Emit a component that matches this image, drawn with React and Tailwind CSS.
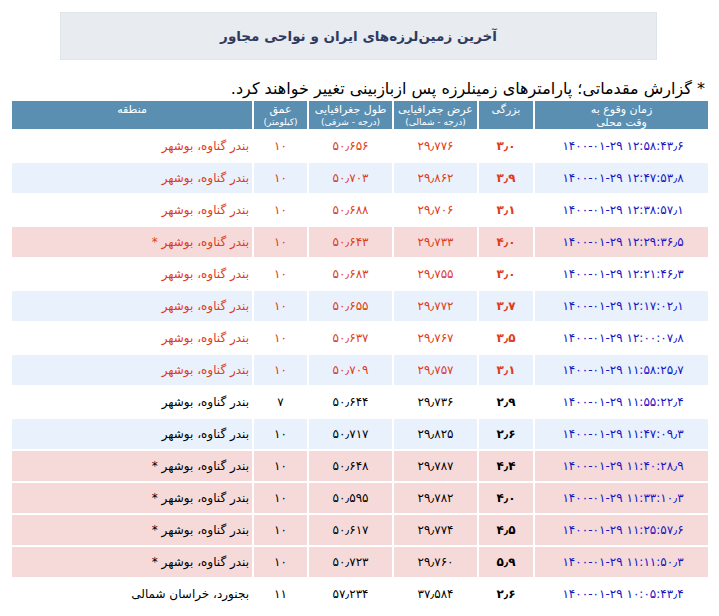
import React from "react";

const faDigits = "۰۱۲۳۴۵۶۷۸۹";
const fa = (s) =>
  String(s)
    .replace(/[0-9]/g, (d) => faDigits[d])
    .replace(/\./g, "٫");

const GANAVEH = "بندر گناوه، بوشهر";

const rows = [
  { t: "12:58:43.6", m: "3.0", lat: "29.776", lon: "50.656", d: "10", red: true, bg: "white" },
  { t: "12:47:53.8", m: "3.9", lat: "29.862", lon: "50.703", d: "10", red: true, bg: "blue" },
  { t: "12:38:57.1", m: "3.1", lat: "29.706", lon: "50.688", d: "10", red: true, bg: "white" },
  { t: "12:29:36.5", m: "4.0", lat: "29.733", lon: "50.643", d: "10", red: true, bg: "pink", star: true },
  { t: "12:21:46.3", m: "3.0", lat: "29.755", lon: "50.683", d: "10", red: true, bg: "white" },
  { t: "12:17:02.1", m: "3.7", lat: "29.772", lon: "50.655", d: "10", red: true, bg: "blue" },
  { t: "12:00:07.8", m: "3.5", lat: "29.767", lon: "50.637", d: "10", red: true, bg: "white" },
  { t: "11:58:25.7", m: "3.1", lat: "29.757", lon: "50.709", d: "10", red: true, bg: "blue" },
  { t: "11:55:22.4", m: "2.9", lat: "29.736", lon: "50.644", d: "7", bg: "white" },
  { t: "11:47:09.3", m: "2.6", lat: "29.825", lon: "50.717", d: "10", bg: "blue" },
  { t: "11:40:28.9", m: "4.4", lat: "29.787", lon: "50.648", d: "10", bg: "pink", star: true },
  { t: "11:33:10.3", m: "4.0", lat: "29.782", lon: "50.595", d: "10", bg: "pink", star: true },
  { t: "11:25:57.6", m: "4.5", lat: "29.774", lon: "50.617", d: "10", bg: "pink", star: true },
  { t: "11:11:50.3", m: "5.9", lat: "29.760", lon: "50.723", d: "10", bg: "pink", star: true },
  { t: "10:05:43.4", m: "2.6", lat: "37.584", lon: "57.234", d: "11", bg: "white", place: "بجنورد، خراسان شمالی" },
];

const bgClass = {
  white: "bg-white",
  blue: "bg-[#e8f1fc]",
  pink: "bg-[#f6dada]",
};

const Row = ({ r }) => {
  const bg = bgClass[r.bg];
  const color = r.red ? "text-[#e03c1c]" : "text-black";
  const place = (r.place || GANAVEH) + (r.star ? " *" : "");
  return (
    <tr className="h-[30px]">
      <td dir="ltr" className={`${bg} text-center pl-[3px] text-[#1414c8] text-[12px] tracking-[2.8px]`}>
        {fa("1400-01-29")} {fa(r.t)}
      </td>
      <td dir="ltr" className={`${bg} text-center font-semibold text-[12px] tracking-[1px] ${color}`}>{fa(r.m)}</td>
      <td dir="ltr" className={`${bg} text-center text-[12px] tracking-[1px] ${color}`}>{fa(r.lat)}</td>
      <td dir="ltr" className={`${bg} text-center text-[12px] tracking-[1px] ${color}`}>{fa(r.lon)}</td>
      <td className={`${bg} text-center text-[12px] tracking-[1px] ${color}`}>{fa(r.d)}</td>
      <td className={`${bg} text-right pr-[3px] text-[12px] ${color}`}>{place}</td>
    </tr>
  );
};

const Head = ({ title, sub, small, w }) => (
  <th className={`bg-[#5a8fb2] text-white font-normal align-top pt-[2px] leading-[13px] ${w}`}>
    <div className="text-[11px]">{title}</div>
    {sub && <div className={small ? "text-[11px]" : "text-[9px]"}>{sub}</div>}
  </th>
);

export default function App() {
  return (
    <div dir="rtl" className="w-[719px] h-[616px] bg-white overflow-hidden" style={{ fontFamily: '"DejaVu Sans", Tahoma, sans-serif' }}>
      <div className="pt-[12px] flex justify-center">
        <div className="w-[597px] h-[48px] bg-[#e8ebf0] border border-[#dfe3ea] flex items-center justify-center mr-[2px]">
          <h1 className="text-[13.5px] font-bold text-[#2e3b5e]">آخرین زمین‌لرزه‌های ایران و نواحی مجاور</h1>
        </div>
      </div>
      <p className="mt-[18px] pr-[14px] text-[16px] text-black leading-[21px]">
        * گزارش مقدماتی؛ پارامترهای زمینلرزه پس ازبازبینی تغییر خواهند کرد.
      </p>
      <table className="mr-[9px] w-[700px] border-separate border-spacing-[2px]">
        <thead>
          <tr className="h-[28px]">
            <Head title="زمان وقوع به" sub="وقت محلی" small w="w-[173px]" />
            <Head title="بزرگی" w="w-[54px]" />
            <Head title="عرض جغرافیایی" sub="(درجه - شمالی)" w="w-[83px]" />
            <Head title="طول جغرافیایی" sub="(درجه - شرقی)" w="w-[83px]" />
            <Head title="عمق" sub="(کیلومتر)" w="w-[53px]" />
            <Head title="منطقه" />
          </tr>
        </thead>
        <tbody>
          {rows.map((r, i) => (
            <Row key={i} r={r} />
          ))}
        </tbody>
      </table>
    </div>
  );
}
